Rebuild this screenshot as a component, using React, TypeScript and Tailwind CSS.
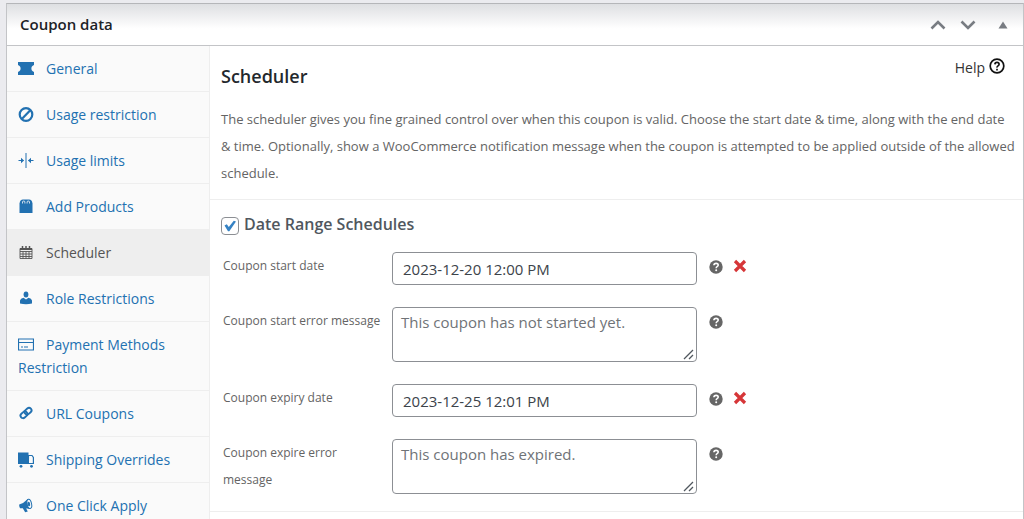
import { useState } from "react";
import type { ReactNode } from "react";

const icons: Record<string, ReactNode> = {
  general: <path d="M0 1h16v3c-2 .8-2.600 2-2.600 3.500s.6 2.700 2.600 3.500v3H0v-3c2-.8 2.600-2 2.600-3.500S2 4.800 0 4z" fill="currentColor" />,
  restriction: (
    <g fill="none" stroke="currentColor" strokeWidth="2.2">
      <circle cx="8" cy="7.500" r="6.300" />
      <path d="M3.800 12 12.300 3.200" />
    </g>
  ),
  limits: (
    <g fill="none" stroke="currentColor" strokeWidth="1">
      <path d="M8 0v15M.5 7.500h5M15.500 7.500h-5" />
      <path d="M3 4.800 6 7.500l-3 2.700zM13 4.800 10 7.500l3 2.700z" fill="currentColor" stroke="none" />
    </g>
  ),
  products: (
    <g>
      <path d="M1.500 4.500Q2 .5 5 .5h6q3 0 3.500 4V14h-13z" fill="currentColor" />
      <path d="M4.500 4.500V3q0-1 1.200-1t1.200 1v1.500M9.100 4.500V3q0-1 1.200-1t1.200 1v1.500" fill="none" stroke="#fafafa" strokeWidth=".8" />
    </g>
  ),
  scheduler: (
    <g fill="none" stroke="currentColor">
      <path d="M2 3.500h12v10H2zM2 6.500h12M2 9h12M2 11.500h12M5 6.500v7M8 6.500v7M11 6.500v7" strokeWidth=".9" />
      <path d="M2 4h12" strokeWidth="2" />
      <path d="M4.500 1v3M8 1v3M11.500 1v3" strokeWidth="1.500" />
    </g>
  ),
  role: (
    <g fill="currentColor">
      <ellipse cx="8" cy="3.500" rx="2.400" ry="2.900" />
      <path d="M2 12.500V9.500Q2.500 7.200 5.500 6.800L8 8.500l2.500-1.700q3 .4 3.500 2.700v3q-6 1.300-12 0z" />
    </g>
  ),
  payment: <path d="M.5 2h15v11H.5zM.5 5.500h15M3 10h2M6 10h4" fill="none" stroke="currentColor" strokeWidth="1.200" />,
  url: (
    <g fill="none" stroke="currentColor" strokeWidth="1.900" transform="rotate(-42 8 7)">
      <rect x="1.500" y="4.500" width="7.500" height="5" rx="2.500" />
      <rect x="7" y="4.500" width="7.500" height="5" rx="2.500" />
    </g>
  ),
  shipping: (
    <g>
      <path d="M0 .5h10.500v11.500H0z" fill="currentColor" />
      <path d="M10.500 3.500h3.500l1.400 2v6h-5z" fill="none" stroke="currentColor" strokeWidth="1.200" />
      <circle cx="3" cy="14.300" r="1.400" fill="currentColor" />
      <circle cx="13.500" cy="14.300" r="1.400" fill="currentColor" />
    </g>
  ),
  apply: (
    <g transform="rotate(-12 8 7)">
      <path d="M1.500 5 5.500 4.500 11 1.500v10.300L5.500 9.500l-4-.5Q.8 7 1.500 5zM4 9h3l1.400 4.800H5.700z" fill="currentColor" />
      <ellipse cx="11.500" cy="6.600" rx="2.200" ry="4.700" fill="#fafafa" stroke="currentColor" strokeWidth="1" />
      <ellipse cx="11" cy="6.600" rx="1.300" ry="2.300" fill="currentColor" />
    </g>
  ),
};

const tabs = [
  { id: "general", label: "General" },
  { id: "restriction", label: "Usage restriction" },
  { id: "limits", label: "Usage limits" },
  { id: "products", label: "Add Products" },
  { id: "scheduler", label: "Scheduler" },
  { id: "role", label: "Role Restrictions" },
  { id: "payment", label: "Payment Methods Restriction" },
  { id: "url", label: "URL Coupons" },
  { id: "shipping", label: "Shipping Overrides" },
  { id: "apply", label: "One Click Apply" },
];

const fields = [
  { id: "start-date", label: "Coupon start date", value: "2023-12-20 12:00 PM" },
  { id: "start-error", label: "Coupon start error message", placeholder: "This coupon has not started yet." },
  { id: "expiry-date", label: "Coupon expiry date", value: "2023-12-25 12:01 PM" },
  { id: "expire-error", label: "Coupon expire error message", placeholder: "This coupon has expired." },
];

function HelpTip() {
  return (
    <button type="button" aria-label="More information" className="mt-2 shrink-0">
      <svg viewBox="0 0 14 14" className="size-[14px]">
        <circle cx="7" cy="7" r="6.700" fill="#666" />
        <path d="M4.900 5.300Q5 3.400 7.100 3.400t2.100 1.700q0 .9-1.100 1.500Q7.200 7.100 7.200 8.200" fill="none" stroke="#fff" strokeWidth="1.600" />
        <circle cx="7.200" cy="10.300" r="1" fill="#fff" />
      </svg>
    </button>
  );
}

export default function App() {
  const [active, setActive] = useState("scheduler");
  const [enabled, setEnabled] = useState(true);

  return (
    <div className="h-screen overflow-hidden bg-[#ebebef] pt-[3px] pl-[6px] font-['Open_Sans',sans-serif]">
      <div className="flex min-h-full flex-col border border-[#c3c4c7] border-t-[#b5b6b9] bg-white">
        <header className="flex h-[42px] shrink-0 items-center justify-between border-b border-[#c3c4c7] bg-linear-to-b from-[#dedfe2] to-white to-60% pr-[15px] pl-[13px]">
          <h2 className="text-[15px] font-semibold text-[#1d2327]">Coupon data</h2>
          <div className="flex items-center gap-[14px] text-[#787c82]">
            <button type="button" aria-label="Move up">
              <svg viewBox="0 0 16 10" className="h-[10px] w-4"><path d="M1.500 8.500 8 2l6.500 6.500" fill="none" stroke="currentColor" strokeWidth="2.600" /></svg>
            </button>
            <button type="button" aria-label="Move down">
              <svg viewBox="0 0 16 10" className="h-[10px] w-4"><path d="M1.500 1.500 8 8l6.500-6.500" fill="none" stroke="currentColor" strokeWidth="2.600" /></svg>
            </button>
            <button type="button" aria-label="Toggle panel" className="ml-2">
              <svg viewBox="0 0 10 8" className="h-2 w-[10px]"><path d="M5 .5 9.500 7.500h-9z" fill="currentColor" /></svg>
            </button>
          </div>
        </header>

        <div className="flex grow">
          <nav className="w-[203px] shrink-0 border-r border-[#eee] bg-[#fafafa]">
            <ul>
              {tabs.map((tab) => (
                <li key={tab.id}>
                  <a
                    href={`#${tab.id}`}
                    onClick={() => setActive(tab.id)}
                    className={`block border-b border-[#eee] py-[11px] pr-3 pl-[11px] text-[14px] leading-[23px] ${
                      active === tab.id ? "bg-[#eee] text-[#555]" : "text-[#2271b1]"
                    }`}
                  >
                    <svg viewBox="0 0 16 16" className="mr-3 mb-[3px] inline-block size-4 align-middle">{icons[tab.id]}</svg>
                    {tab.label}
                  </a>
                </li>
              ))}
            </ul>
          </nav>

          <main className="min-w-0 grow">
            <section className="border-b border-[#eee] pt-3 pr-1 pb-3 pl-[11px]">
              <div className="flex items-start justify-between pr-[14px]">
                <h3 className="pt-[3px] text-[18px] leading-[30px] font-semibold text-[#23282d]">Scheduler</h3>
                <a href="#help" className="flex items-center gap-1 text-[14px] leading-5 text-[#333]">
                  Help
                  <svg viewBox="0 0 16 16" className="mb-1 size-4" fill="none" stroke="#111" strokeWidth="1.700">
                    <circle cx="8" cy="8" r="6.800" />
                    <path d="M5.900 6.400Q6 4.400 8 4.400t2.100 1.900q0 .9-1.100 1.600T8 9.700" />
                    <path d="M8 10.700v1.700" />
                  </svg>
                </a>
              </div>
              <p className="pt-[15px] text-[13px] leading-[27px] text-[#646464]">
                The scheduler gives you fine grained control over when this coupon is valid. Choose the start date &amp;&nbsp;time, along with the end date &amp;&nbsp;time. Optionally, show a WooCommerce notification message when the coupon is attempted to be applied outside of the allowed schedule.
              </p>
            </section>

            <section className="border-b border-[#eee] pt-3 pr-3 pb-[17px] pl-[11px]">
              <div className="flex items-center gap-[5px]">
                <span className="relative mt-1 size-[18px]">
                  <input
                    id="date-range"
                    type="checkbox"
                    checked={enabled}
                    onChange={(e) => setEnabled(e.target.checked)}
                    className="block size-[18px] appearance-none rounded-sm border border-[#8c8f94] bg-white"
                  />
                  {enabled && (
                    <svg viewBox="0 0 18 18" className="pointer-events-none absolute inset-0">
                      <path d="m3.500 8.500 2.300-1.300 2 2.700 5-6.200 2.200.9-6.700 9.600H7z" fill="#3582c4" />
                    </svg>
                  )}
                </span>
                <label htmlFor="date-range" className="text-[16px] leading-6 font-semibold text-[#50575e]">Date Range Schedules</label>
              </div>

              <div className="mt-4 flex flex-col gap-[22px]">
                {fields.map((field) => (
                  <div key={field.id} className="flex h-[33px] items-start has-[textarea]:h-[55px]">
                    <label htmlFor={field.id} className="w-[171px] shrink-0 pr-1 pl-[2px] text-[12px] leading-[27px] text-[#646464]">{field.label}</label>
                    {field.value ? (
                      <input id={field.id} type="text" defaultValue={field.value} className="h-[33px] w-[305px] rounded-sm border border-[#8c8f94] px-[10px] text-[15px] text-[#3c434a]" />
                    ) : (
                      <div className="relative">
                        <textarea id={field.id} placeholder={field.placeholder} className="block h-[55px] w-[305px] resize-none rounded-sm border border-[#8c8f94] px-2 py-[3px] text-[15px] leading-[22px] text-[#3c434a] placeholder:text-[#6f7377]" />
                        <svg viewBox="0 0 12 12" className="pointer-events-none absolute right-[2px] bottom-[2px] size-3">
                          <path d="M1 11 10 2M6 11l4-4" stroke="#50575e" strokeWidth="1.300" />
                        </svg>
                      </div>
                    )}
                    <div className="ml-3 flex gap-[10px]">
                      <HelpTip />
                      {field.value && (
                        <button type="button" aria-label="Clear date" className="mt-[6px]">
                          <svg viewBox="0 0 14 14" className="size-[14px]"><path d="m2 2 10 10M12 2 2 12" stroke="#d63638" strokeWidth="3.200" /></svg>
                        </button>
                      )}
                    </div>
                  </div>
                ))}
              </div>
            </section>
          </main>
        </div>
      </div>
    </div>
  );
}
